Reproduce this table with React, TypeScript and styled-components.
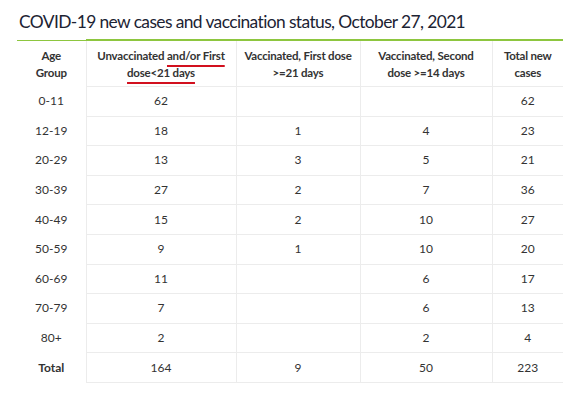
import React from "react";
import styled, { createGlobalStyle } from "styled-components";

const Global = createGlobalStyle`
  html, body { margin: 0; padding: 0; background: #ffffff; }
  body { font-family: Lato, "Open Sans", sans-serif; }
`;

const Page = styled.div`
  padding: 11px 8px 0 17px;
  width: 546px;
`;

const Title = styled.h2`
  margin: 0 0 6px 2px;
  font-family: Lato, "Open Sans", sans-serif;
  font-weight: 400;
  font-size: 17.4px;
  line-height: 22px;
  color: #1c2333;
  letter-spacing: -0.6px;
  white-space: nowrap;
`;

const Table = styled.table`
  width: 546px;
  border-collapse: collapse;
  table-layout: fixed;
  font-size: 12px;
  color: #333333;
`;

const Col = styled.col<{ $w: number }>`
  width: ${(p) => p.$w}px;
`;

const HeadRow = styled.tr``;

const HeadCell = styled.th<{ $first?: boolean }>`
  font-weight: 700;
  font-size: 11.5px;
  letter-spacing: -0.2px;
  white-space: nowrap;
  text-align: center;
  vertical-align: middle;
  line-height: 17px;
  padding: 6px 0 5px;
  height: 34px;
  border-top: ${(p) => (p.$first ? "1px" : "2px")} solid #8dc63f;
  border-left: ${(p) => (p.$first ? "none" : "1px solid #ececec")};
  border-bottom: ${(p) => (p.$first ? "none" : "1px solid #ececec")};
  color: #333333;
`;

const Row = styled.tr``;

const AgeCell = styled.th<{ $bold?: boolean }>`
  font-weight: ${(p) => (p.$bold ? 700 : 400)};
  text-align: center;
  padding: 0;
  height: 28.6px;
  line-height: 18px;
  color: #333333;
`;

const Cell = styled.td`
  text-align: center;
  padding: 0;
  height: 28.6px;
  line-height: 18px;
  border-left: 1px solid #ececec;
  border-bottom: 1px solid #ececec;
  color: #333333;
`;

const Marked = styled.span`
  text-decoration: underline;
  text-decoration-color: #d2101e;
  text-decoration-thickness: 2px;
  text-underline-offset: 4.5px;
`;

type RowData = [string, string, string, string, string];

const rows: RowData[] = [
  ["0-11", "62", "", "", "62"],
  ["12-19", "18", "1", "4", "23"],
  ["20-29", "13", "3", "5", "21"],
  ["30-39", "27", "2", "7", "36"],
  ["40-49", "15", "2", "10", "27"],
  ["50-59", "9", "1", "10", "20"],
  ["60-69", "11", "", "6", "17"],
  ["70-79", "7", "", "6", "13"],
  ["80+", "2", "", "2", "4"],
  ["Total", "164", "9", "50", "223"],
];

export default function App() {
  return (
    <>
      <Global />
      <Page>
        <Title>COVID-19 new cases and vaccination status, October 27, 2021</Title>
        <Table>
          <colgroup>
            <Col $w={69} />
            <Col $w={150} />
            <Col $w={124} />
            <Col $w={132} />
            <Col $w={71} />
          </colgroup>
          <thead>
            <HeadRow>
              <HeadCell $first>
                Age
                <br />
                Group
              </HeadCell>
              <HeadCell>
                Unvaccinated <Marked>and/or First</Marked>
                <br />
                <Marked>dose&lt;21 days</Marked>
              </HeadCell>
              <HeadCell>
                Vaccinated, First dose
                <br />
                &gt;=21 days
              </HeadCell>
              <HeadCell>
                Vaccinated, Second
                <br />
                dose &gt;=14 days
              </HeadCell>
              <HeadCell>
                Total new
                <br />
                cases
              </HeadCell>
            </HeadRow>
          </thead>
          <tbody>
            {rows.map((r) => (
              <Row key={r[0]}>
                <AgeCell $bold={r[0] === "Total"}>{r[0]}</AgeCell>
                <Cell>{r[1]}</Cell>
                <Cell>{r[2]}</Cell>
                <Cell>{r[3]}</Cell>
                <Cell>{r[4]}</Cell>
              </Row>
            ))}
          </tbody>
        </Table>
      </Page>
    </>
  );
}
